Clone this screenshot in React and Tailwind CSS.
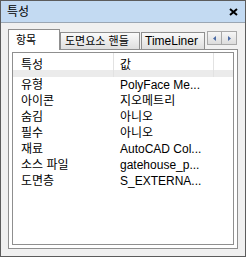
import React from 'react';

const rows = [
  ['유형', 'PolyFace Me...'],
  ['아이콘', '지오메트리'],
  ['숨김', '아니오'],
  ['필수', '아니오'],
  ['재료', 'AutoCAD Col...'],
  ['소스 파일', 'gatehouse_p...'],
  ['도면층', 'S_EXTERNA...'],
];

const font = { fontFamily: '"Liberation Sans", "Noto Sans CJK KR", sans-serif' };

const App = () => {
  return (
    <div
      className="w-[246px] h-[257px] border border-[#5c5c5c] bg-[#f0f0f0] flex flex-col text-black overflow-hidden"
      style={font}
    >
      {/* title bar */}
      <div className="h-[22px] shrink-0 flex items-center justify-between bg-[#c3daf2] border-b border-[#9aa6b3] pl-[6px] pr-[7px]">
        <span className="text-[12px] leading-none">특성</span>
        <svg width="9" height="8" viewBox="0 0 9 8" className="mr-[0px]">
          <path d="M1 1 L8 7 M8 1 L1 7" stroke="#000" strokeWidth="2" />
        </svg>
      </div>

      <div className="flex flex-col px-[7px] pt-[6px]">
        {/* tabs */}
        <div className="flex items-end h-[20px] relative z-10">
          <div className="w-[52px] h-[21px] -mb-px bg-white border border-b-0 border-[#8f8f8f] flex items-center pl-[7px] text-[11px] leading-none">
            항목
          </div>
          <div className="w-[80px] h-[17px] border border-b-0 border-[#8f8f8f] bg-[linear-gradient(#fafafa,#dedede)] flex items-center pl-[4px] text-[11px] leading-none">
            도면요소 핸들
          </div>
          <div className="w-[64px] h-[17px] ml-[1px] border border-b-0 border-[#8f8f8f] bg-[linear-gradient(#fafafa,#dedede)] flex items-center pl-[3px] text-[12px] leading-none">
            TimeLiner
          </div>
          <div className="ml-[2px] self-start mt-[2px] flex w-[30px] h-[14px]">
            <div className="w-[15px] h-[14px] border border-[#a8a8a8] bg-[linear-gradient(#f6f6f6,#dcdcdc)] flex items-center justify-center">
              <svg width="3" height="5" viewBox="0 0 3 5">
                <path d="M3 0 L0 2.5 L3 5 Z" fill="#4a6aa5" />
              </svg>
            </div>
            <div className="w-[15px] h-[14px] border border-l-0 border-[#a8a8a8] bg-[linear-gradient(#f6f6f6,#dcdcdc)] flex items-center justify-center">
              <svg width="3" height="5" viewBox="0 0 3 5">
                <path d="M0 0 L3 2.5 L0 5 Z" fill="#4a6aa5" />
              </svg>
            </div>
          </div>
        </div>

        {/* panel */}
        <div className="h-[200px] border border-[#8f8f8f] bg-white pt-[2px] px-[3px] pb-[3px] flex flex-col">
          <div className="flex-1 border border-[#8f8f8f] bg-white flex flex-col">
            <div className="h-[24px] flex bg-[linear-gradient(#ffffff_0%,#ffffff_70%,#ebebeb_70%,#ebebeb_100%)] text-[12px]">
              <div className="w-[100px] flex items-center pl-[8px]">특성</div>
              <div className="w-[100px] flex items-center pl-[6px] border-l border-[#e2e2e2]">값</div>
              <div className="flex-1 border-l border-[#e2e2e2]"></div>
            </div>
            {rows.map(([k, v]) => (
              <div key={k} className="h-[16px] flex items-center text-[12px] leading-none">
                <div className="w-[100px] pl-[8px] whitespace-nowrap">{k}</div>
                <div className="pl-[7px] whitespace-nowrap">{v}</div>
              </div>
            ))}
          </div>
        </div>
      </div>
    </div>
  );
};

export default App;
